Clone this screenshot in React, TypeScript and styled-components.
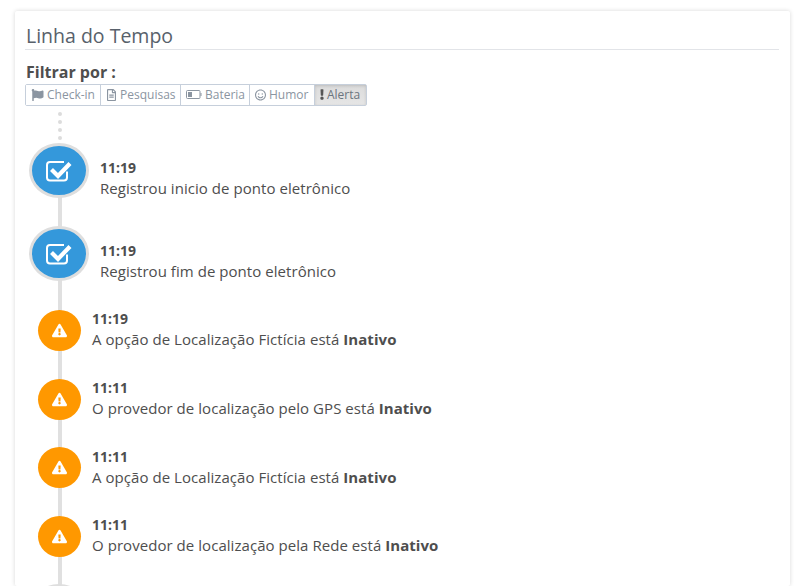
import type { FunctionComponent, ReactNode } from 'react'
import styled, { createGlobalStyle } from 'styled-components'
import {
  FaExclamation,
  FaExclamationTriangle,
  FaFlag,
  FaRegFileAlt,
  FaRegSmile,
} from 'react-icons/fa'

const GlobalStyle = createGlobalStyle`
  html, body {
    margin: 0;
    padding: 0;
    height: 586px;
    overflow: hidden;
    background: #fff;
    font-family: "Open Sans", "Liberation Sans", sans-serif;
    color: #4e4e4e;
  }
`

const Page = styled.div`
  padding: 11px 13px 0 15px;
`

const Card = styled.section`
  padding: 11px 11px 0 10px;
  height: 575px;
  box-sizing: border-box;
  background: #fff;
  border-radius: 2px;
  box-shadow: 0 0 4px rgba(0, 0, 0, 0.16);
  overflow: hidden;
`

const Title = styled.h2`
  margin: 0;
  padding-left: 1px;
  height: 27px;
  line-height: 28px;
  font-size: 19.5px;
  font-weight: 400;
  color: #58616b;
  border-bottom: 1px solid #e2e4e8;
`

const FilterLabel = styled.div`
  margin-top: 11px;
  padding-left: 1px;
  height: 23px;
  line-height: 23px;
  font-size: 16px;
  font-weight: 700;
  color: #4e4e4e;
`

const FilterGroup = styled.div`
  display: flex;
  width: fit-content;
  height: 22px;
  box-sizing: border-box;
  border: 1px solid #c6cfdb;
  border-radius: 2px;
`

const FilterButton = styled.button<{ $active?: boolean; $width: number; $iconWidth: number }>`
  display: flex;
  align-items: center;
  gap: 3px;
  width: ${({ $width }) => $width}px;
  margin: 0;
  padding: 0 0 1px 5px;
  box-sizing: border-box;
  border: 0;
  border-left: 1px solid #c6cfdb;
  background: ${({ $active }) => ($active ? 'linear-gradient(#dcdcdc, #e6e6e6)' : '#fff')};
  box-shadow: ${({ $active }) => ($active ? 'inset 0 1px 3px rgba(0, 0, 0, 0.14)' : 'none')};
  color: ${({ $active }) => ($active ? '#6b747e' : '#8b95a1')};
  font-family: inherit;
  font-size: 12px;
  white-space: nowrap;

  &:first-child {
    border-left: 0;
  }

  svg {
    flex: none;
    width: ${({ $iconWidth }) => $iconWidth}px;
    color: ${({ $active }) => ($active ? '#555' : '#8b95a1')};
  }
`

const Timeline = styled.div`
  position: relative;
  margin-top: 6px;
`

const Rail = styled.div`
  position: absolute;
  top: 33px;
  bottom: 0;
  left: 33px;
  width: 4px;
  background: #e0e0e0;
`

const Dots = styled.div`
  display: flex;
  flex-direction: column;
  gap: 4px;
  height: 31px;
  padding-left: 33px;
`

const Dot = styled.span`
  flex: none;
  width: 4px;
  height: 4px;
  border-radius: 50%;
  background: #dcdcdc;
`

const Row = styled.div<{ $big?: boolean }>`
  position: relative;
  display: flex;
  align-items: flex-start;
  height: ${({ $big }) => ($big ? '83px' : '68.67px')};
  padding-left: ${({ $big }) => ($big ? '4px' : '13px')};
`

const Badge = styled.div<{ $big?: boolean }>`
  flex: none;
  display: flex;
  align-items: center;
  justify-content: center;
  box-sizing: border-box;
  width: ${({ $big }) => ($big ? '60px' : '43px')};
  height: ${({ $big }) => ($big ? '55px' : '41px')};
  margin-top: ${({ $big }) => ($big ? '0' : '1px')};
  border-radius: 50%;
  color: #fff;
  background: ${({ $big }) => ($big ? '#3498db' : '#ff9800')};
  border: ${({ $big }) => ($big ? '3px solid #dedede' : '0')};
`

const Body = styled.div<{ $big?: boolean }>`
  margin-left: 11px;
  margin-top: ${({ $big }) => ($big ? '15px' : '0.3px')};
  font-size: 15px;
  line-height: 21px;
  letter-spacing: 0.05px;
`

const Time = styled.div`
  font-size: 14px;
  font-weight: 700;
  line-height: 20px;
  letter-spacing: 0;
`

const CheckIcon = () => (
  <svg width="26" height="24" viewBox="0 0 26 24" fill="none">
    <path
      d="M21 12.5v6a3 3 0 0 1-3 3H4a3 3 0 0 1-3-3V6a3 3 0 0 1 3-3h14"
      stroke="#fff"
      strokeWidth="2"
    />
    <path d="M5.5 10.5l6.5 6.5L24 4.5" stroke="#fff" strokeWidth="4.2" />
  </svg>
)

const BatteryIcon = () => (
  <svg width="16" height="9" viewBox="0 0 16 9" fill="none">
    <rect x="0.5" y="0.5" width="13.5" height="8" rx="1" stroke="currentColor" />
    <rect x="2" y="2" width="4" height="5" fill="currentColor" />
    <path d="M15 3v3" stroke="currentColor" />
  </svg>
)

type Entry = { time: string; text: string; status?: string; big?: boolean }

const entries: Entry[] = [
  { time: '11:19', text: 'Registrou inicio de ponto eletrônico', big: true },
  { time: '11:19', text: 'Registrou fim de ponto eletrônico', big: true },
  { time: '11:19', text: 'A opção de Localização Fictícia está ', status: 'Inativo' },
  { time: '11:11', text: 'O provedor de localização pelo GPS está ', status: 'Inativo' },
  { time: '11:11', text: 'A opção de Localização Fictícia está ', status: 'Inativo' },
  { time: '11:11', text: 'O provedor de localização pela Rede está ', status: 'Inativo' },
]

const filters: {
  label: string
  width: number
  iconWidth: number
  icon: ReactNode
  active?: boolean
}[] = [
  { label: 'Check-in', width: 74, iconWidth: 13, icon: <FaFlag size={12} /> },
  { label: 'Pesquisas', width: 80, iconWidth: 11, icon: <FaRegFileAlt size={12} /> },
  { label: 'Bateria', width: 69, iconWidth: 16, icon: <BatteryIcon /> },
  { label: 'Humor', width: 65, iconWidth: 11, icon: <FaRegSmile size={12} /> },
  { label: 'Alerta', width: 52, iconWidth: 4, icon: <FaExclamation size={11} />, active: true },
]

const App: FunctionComponent = () => (
  <Page>
    <GlobalStyle />
    <Card>
      <Title>Linha do Tempo</Title>
      <FilterLabel>Filtrar por :</FilterLabel>
      <FilterGroup>
        {filters.map((filter) => (
          <FilterButton
            key={filter.label}
            $active={filter.active}
            $width={filter.width}
            $iconWidth={filter.iconWidth}
          >
            {filter.icon}
            {filter.label}
          </FilterButton>
        ))}
      </FilterGroup>
      <Timeline>
        <Rail />
        <Dots>
          <Dot />
          <Dot />
          <Dot />
          <Dot />
        </Dots>
        {entries.map((entry, index) => (
          <Row key={index} $big={entry.big}>
            <Badge $big={entry.big}>
              {entry.big ? <CheckIcon /> : <FaExclamationTriangle size={15} />}
            </Badge>
            <Body $big={entry.big}>
              <Time>{entry.time}</Time>
              {entry.text}
              {entry.status && <strong>{entry.status}</strong>}
            </Body>
          </Row>
        ))}
        <Row $big>
          <Badge $big />
        </Row>
      </Timeline>
    </Card>
  </Page>
)

export default App
